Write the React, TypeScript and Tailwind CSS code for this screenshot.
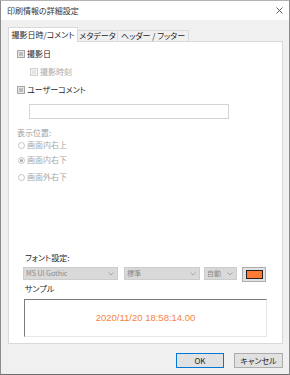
import React from 'react';

const jp = { fontFamily: '"Noto Sans CJK JP", "Noto Sans", sans-serif' };

const CheckBox: React.FC<{ disabled?: boolean }> = ({ disabled }) => (
  <span
    className={`inline-flex h-[8px] w-[8px] items-center justify-center border ${
      disabled ? 'border-[#d2d2d2] bg-[#f2f2f2]' : 'border-[#a6a6a6] bg-[#e6e6e6]'
    }`}
  >
    <span className={`h-[4px] w-[4px] ${disabled ? 'bg-[#e4e4e4]' : 'bg-[#bdbdbd]'}`}></span>
  </span>
);

const Radio: React.FC<{ checked?: boolean }> = ({ checked }) => (
  <span className="inline-flex h-[7px] w-[7px] items-center justify-center rounded-full border border-[#c4c4c4] bg-white">
    {checked && <span className="h-[3px] w-[3px] rounded-full bg-[#a8a8a8]"></span>}
  </span>
);

const Select: React.FC<{ label: string; width: string }> = ({ label, width }) => (
  <div
    className={`flex h-[13px] items-center justify-between border border-[#cccccc] bg-[#d9d9d9] pl-[2px] pr-[3px] text-[7px] text-[#8a8a8a] ${width}`}
  >
    <span className="leading-none">{label}</span>
    <svg width="6" height="4" viewBox="0 0 6 4">
      <path d="M0.5 0.5 L3 3 L5.5 0.5" fill="none" stroke="#9a9a9a" strokeWidth="0.8" />
    </svg>
  </div>
);

export default function App() {
  return (
    <div
      className="flex h-[375px] w-[290px] flex-col border-x border-b border-t border-x-[#8c8c8c] border-b-[#6c6c6c] border-t-[#b4b4b4] bg-[#f0f0f0] text-[8px] text-[#262626] [font-feature-settings:'palt']"
      style={jp}
    >
      {/* title bar */}
      <div className="flex h-[19px] items-center justify-between bg-white pl-[6px] pr-[6px]">
        <span className="text-[8px] leading-none text-[#333333]">印刷情報の詳細設定</span>
        <svg width="7" height="7" viewBox="0 0 7 7">
          <path d="M0.5 0.5 L6.5 6.5 M6.5 0.5 L0.5 6.5" stroke="#333333" strokeWidth="0.8" />
        </svg>
      </div>

      <div className="flex flex-1 flex-col pl-[7px] pr-[6px]">
        {/* tabs */}
        <div className="mt-[7px] flex h-[14px] items-end">
          <div className="relative z-10 -mb-px flex h-[15px] w-[70px] items-center justify-center border border-b-0 border-[#d9d9d9] bg-white">
            <span className="leading-none">撮影日時/コメント</span>
          </div>
          <div className="flex h-[11px] w-[40px] items-center justify-center border border-l-0 border-b-0 border-[#d9d9d9] bg-[#f0f0f0]">
            <span className="leading-none">メタデータ</span>
          </div>
          <div className="flex h-[11px] w-[71px] items-center justify-center border border-l-0 border-b-0 border-[#d9d9d9] bg-[#f0f0f0]">
            <span className="leading-none">ヘッダー / フッター</span>
          </div>
        </div>

        {/* panel */}
        <div className="flex h-[303px] flex-col border border-[#d9d9d9] bg-white">
          <div className="mt-[6px] flex h-[12px] items-center gap-[2px] pl-[8px]">
            <CheckBox />
            <span className="leading-none">撮影日</span>
          </div>
          <div className="mt-[6px] flex h-[12px] items-center gap-[2px] pl-[21px] text-[#a8a8a8]">
            <CheckBox disabled />
            <span className="leading-none">撮影時刻</span>
          </div>
          <div className="mt-[6px] flex h-[12px] items-center gap-[2px] pl-[8px]">
            <CheckBox />
            <span className="leading-none">ユーザーコメント</span>
          </div>
          <div className="ml-[20px] mt-[8px] h-[15px] w-[200px] border border-[#d4d4d4] bg-white"></div>

          <div className="ml-[8px] mt-[8px] flex h-[12px] items-center text-[#a0a0a0]">
            <span className="leading-none">表示位置:</span>
          </div>
          <div className="flex flex-col pl-[9px] text-[#a8a8a8]">
            <div className="flex h-[12px] items-center gap-[2px]">
              <Radio />
              <span className="leading-none">画面内右上</span>
            </div>
            <div className="mt-[3px] flex h-[12px] items-center gap-[2px]">
              <Radio checked />
              <span className="leading-none">画面内右下</span>
            </div>
            <div className="mt-[5px] flex h-[12px] items-center gap-[2px]">
              <Radio />
              <span className="leading-none">画面外右下</span>
            </div>
          </div>

          <div className="mt-auto flex flex-col pb-[6px] pl-[14px]">
            <div className="flex h-[12px] items-center pl-[2px]">
              <span className="leading-none">フォント設定:</span>
            </div>
            <div className="mt-[3px] flex h-[15px] items-start">
              <Select label="MS UI Gothic" width="w-[95px]" />
              <div className="ml-[6px]">
                <Select label="標準" width="w-[76px]" />
              </div>
              <div className="ml-[4px]">
                <Select label="自動" width="w-[33px]" />
              </div>
              <div className="ml-[5px] flex h-[15px] w-[24px] items-center justify-center border border-[#adadad] bg-[#e1e1e1]">
                <span className="h-[9px] w-[17px] border border-[#222222] bg-[#ff7a33]"></span>
              </div>
            </div>
            <div className="mt-[1px] flex h-[12px] items-center pl-[2px]">
              <span className="leading-none">サンプル</span>
            </div>
            <div className="ml-[1px] mt-[4px] flex h-[38px] w-[243px] items-center justify-center border border-l-[#7a7a7a] border-t-[#7a7a7a] border-r-[#e8e8e8] border-b-[#e8e8e8] bg-white">
              <span className="text-[9.5px] leading-none text-[#f5843f]" style={{ fontFamily: '"Liberation Sans", sans-serif' }}>
                2020/11/20 18:58:14.00
              </span>
            </div>
          </div>
        </div>

        {/* buttons */}
        <div className="mt-[9px] flex justify-end gap-[10px]">
          <button className="flex h-[15px] w-[48px] items-center justify-center border border-[#0078d7] bg-[#e1e1e1] text-[8px] leading-none">
            OK
          </button>
          <button className="flex h-[15px] w-[49px] items-center justify-center border border-[#adadad] bg-[#e1e1e1] text-[8px] leading-none">
            キャンセル
          </button>
        </div>
      </div>
    </div>
  );
}
